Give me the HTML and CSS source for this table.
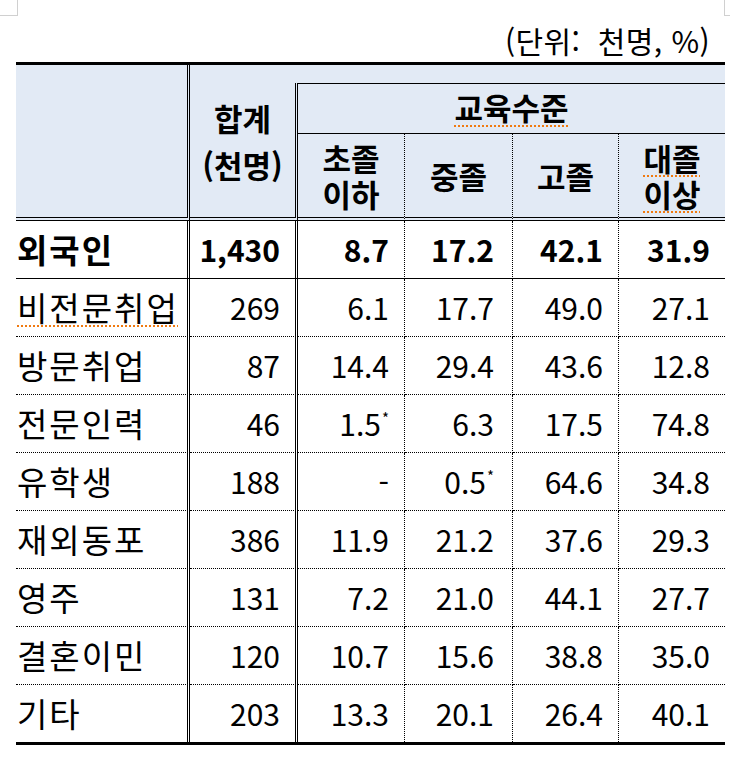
FILE: index.html
```html
<!DOCTYPE html>
<html lang="ko">
<head>
<meta charset="utf-8">
<title>외국인 교육수준</title>
<link rel="stylesheet" href="styles.css">
</head>
<body>
<div class="page">
  <span class="mark mark-tl"></span>
  <span class="mark mark-tr"></span>
  <p class="unit">(단위:&nbsp; 천명, %)</p>
  <table class="stats">
    <colgroup>
      <col class="w-label"><col class="w-total"><col class="w-e1"><col class="w-e2"><col class="w-e3"><col class="w-e4">
    </colgroup>
    <thead>
      <tr class="r-a">
        <th rowspan="3" class="h-label"></th>
        <th colspan="5" class="h-gap"></th>
      </tr>
      <tr class="r-b">
        <th rowspan="2" class="h-total"><span class="ln ln-tall">합계</span><span class="ln ln-tall">(천명)</span></th>
        <th colspan="4" class="h-group"><span class="spell">교육수준</span></th>
      </tr>
      <tr class="r-c">
        <th class="h-sub"><span class="ln">초졸</span><span class="ln">이하</span></th>
        <th class="h-sub">중졸</th>
        <th class="h-sub">고졸</th>
        <th class="h-sub h-last"><span class="ln"><span class="spell">대졸</span></span><span class="ln"><span class="spell">이상</span></span></th>
      </tr>
    </thead>
    <tbody>
      <tr class="total">
        <td class="lbl">외국인</td><td class="n2">1,430</td><td class="n3">8.7</td><td class="n4">17.2</td><td class="n5">42.1</td><td class="n6">31.9</td>
      </tr>
      <tr>
        <td class="lbl"><span class="spell">비전문취업</span></td><td class="n2">269</td><td class="n3">6.1</td><td class="n4">17.7</td><td class="n5">49.0</td><td class="n6">27.1</td>
      </tr>
      <tr>
        <td class="lbl">방문취업</td><td class="n2">87</td><td class="n3">14.4</td><td class="n4">29.4</td><td class="n5">43.6</td><td class="n6">12.8</td>
      </tr>
      <tr>
        <td class="lbl">전문인력</td><td class="n2">46</td><td class="n3">1.5<sup class="star">*</sup></td><td class="n4">6.3</td><td class="n5">17.5</td><td class="n6">74.8</td>
      </tr>
      <tr>
        <td class="lbl">유학생</td><td class="n2">188</td><td class="n3">-</td><td class="n4">0.5<sup class="star">*</sup></td><td class="n5">64.6</td><td class="n6">34.8</td>
      </tr>
      <tr>
        <td class="lbl">재외동포</td><td class="n2">386</td><td class="n3">11.9</td><td class="n4">21.2</td><td class="n5">37.6</td><td class="n6">29.3</td>
      </tr>
      <tr>
        <td class="lbl">영주</td><td class="n2">131</td><td class="n3">7.2</td><td class="n4">21.0</td><td class="n5">44.1</td><td class="n6">27.7</td>
      </tr>
      <tr>
        <td class="lbl">결혼이민</td><td class="n2">120</td><td class="n3">10.7</td><td class="n4">15.6</td><td class="n5">38.8</td><td class="n6">35.0</td>
      </tr>
      <tr class="last">
        <td class="lbl">기타</td><td class="n2">203</td><td class="n3">13.3</td><td class="n4">20.1</td><td class="n5">26.4</td><td class="n6">40.1</td>
      </tr>
    </tbody>
  </table>
</div>
</body>
</html>
```

FILE: styles.css
```css
* { box-sizing: border-box; }

html, body {
  margin: 0;
  padding: 0;
  background: #ffffff;
}

body {
  font-family: "Noto Sans CJK KR", "Noto Sans", sans-serif;
  color: #000;
}

.page {
  position: relative;
  width: 730px;
  height: 769px;
}

.mark {
  position: absolute;
  top: 0;
  border-color: #d0d0d0;
  border-style: solid;
}

.mark-tl {
  left: 0;
  width: 18px;
  height: 16px;
  border-width: 0 1px 1px 0;
}

.mark-tr {
  left: 724px;
  width: 8px;
  height: 16px;
  border-width: 0 0 1px 1px;
}

.unit {
  margin: 0;
  height: 62px;
  padding: 22px 20px 0 0;
  text-align: right;
  font-size: 30px;
  line-height: 36px;
  font-weight: 400;
  letter-spacing: 0.4px;
}

.stats {
  margin-left: 16px;
  width: 709px;
  table-layout: fixed;
  border-collapse: separate;
  border-spacing: 0;
  border-top: 3px solid #000;
  border-bottom: 3px solid #000;
  font-size: 30px;
}

.w-label { width: 174px; }
.w-total { width: 108px; }
.w-e1 { width: 107px; }
.w-e2 { width: 108px; }
.w-e3 { width: 106px; }
.w-e4 { width: 106px; }

thead th {
  background: #e2eaf5;
  font-weight: 700;
  font-size: 31px;
  padding: 0;
  text-align: center;
  vertical-align: middle;
}

.ln {
  display: block;
  height: 36px;
  line-height: 36px;
}

.ln-tall {
  height: 47px;
  line-height: 47px;
}

.r-a { height: 18px; }
.r-b { height: 51px; }
.r-c { height: 87px; }

.h-label {
  border-right: 3px double #000;
  border-bottom: 4px double #000;
}

.h-total {
  border-right: 3px double #000;
  border-bottom: 4px double #000;
  padding-bottom: 18px;
}

.h-group {
  border-top: 1px solid #000;
  border-bottom: 1px solid #000;
  line-height: 40px;
  padding-bottom: 3px;
}

.h-sub {
  border-right: 1px dotted #000;
  border-bottom: 4px double #000;
  line-height: 36px;
}

.h-sub.h-last { border-right: 0; }

.spell {
  text-decoration-line: underline;
  text-decoration-style: dotted;
  text-decoration-color: #f07a10;
  text-decoration-thickness: 2px;
  text-underline-offset: 5px;
}

tbody td {
  height: 58px;
  padding: 0 15px 2px 0;
  text-align: right;
  vertical-align: middle;
  line-height: 40px;
  border-bottom: 1px dotted #000;
  border-right: 1px dotted #000;
  white-space: nowrap;
}

tbody td.lbl {
  text-align: left;
  padding-left: 1px;
  font-size: 33px;
  letter-spacing: 2px;
  border-right: 3px double #000;
}

tbody td.n2 { border-right: 3px double #000; }
tbody td.n4 { padding-right: 18px; }
tbody td.n6 { border-right: 0; }

tbody tr.total td {
  font-weight: 700;
  border-bottom: 1px solid #000;
}

tbody tr.last td {
  height: 57px;
  border-bottom: 0;
}

.star {
  font-size: 15px;
  line-height: 0;
  vertical-align: 12px;
  margin-left: 1px;
}
```
